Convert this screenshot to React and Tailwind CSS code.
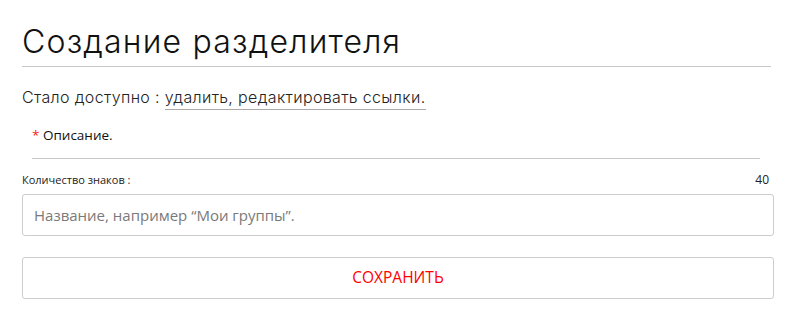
import React from "react";

const App = () => {
  return (
    <div className="w-[791px] h-[320px] bg-white px-[22px] pt-[20px] text-[#222]">
      {/* Title */}
      <h1 className="font-['Inter',sans-serif] font-light text-[32px] leading-[44px] tracking-[1.2px] text-[#111]">
        Создание разделителя
      </h1>
      <div className="h-px bg-[#c8c8c8] mt-[2px] w-[749px]" />

      {/* Available actions */}
      <p className="mt-[20px] font-['Inter',sans-serif] font-light text-[16px] leading-[20px] tracking-[0.35px] text-[#222]">
        Стало доступно :{" "}
        <a href="#" className="border-b border-[#aaa] pb-[2px]">
          удалить, редактировать ссылки.
        </a>
      </p>

      {/* Description */}
      <div className="ml-[10px] mr-[9px] mt-[15px] border-b border-[#c8c8c8] pb-[12px]">
        <span className="font-['Open_Sans',sans-serif] text-[13.5px] leading-[20px] text-[#111]">
          <span className="text-[#f22]">*</span> Описание.
        </span>
      </div>

      {/* Counter */}
      <div className="mt-[13px] flex items-center justify-between font-['Open_Sans',sans-serif] text-[11px] leading-[16px] text-[#222]">
        <span>Количество знаков :</span>
        <span className="text-[12px]">40</span>
      </div>

      <input
        type="text"
        placeholder="Название, например “Мои группы”."
        className="mt-[6px] block w-[752px] h-[42px] rounded-[3px] border border-[#ccc] px-[11px] font-['Open_Sans',sans-serif] text-[15px] text-[#333] placeholder:text-[#7a7a7a] outline-none"
      />

      <button className="mt-[21px] block w-[752px] h-[42px] rounded-[3px] border border-[#ccc] bg-white font-['Open_Sans',sans-serif] text-[15.5px] text-[#ff0000]">
        СОХРАНИТЬ
      </button>
    </div>
  );
};

export default App;
